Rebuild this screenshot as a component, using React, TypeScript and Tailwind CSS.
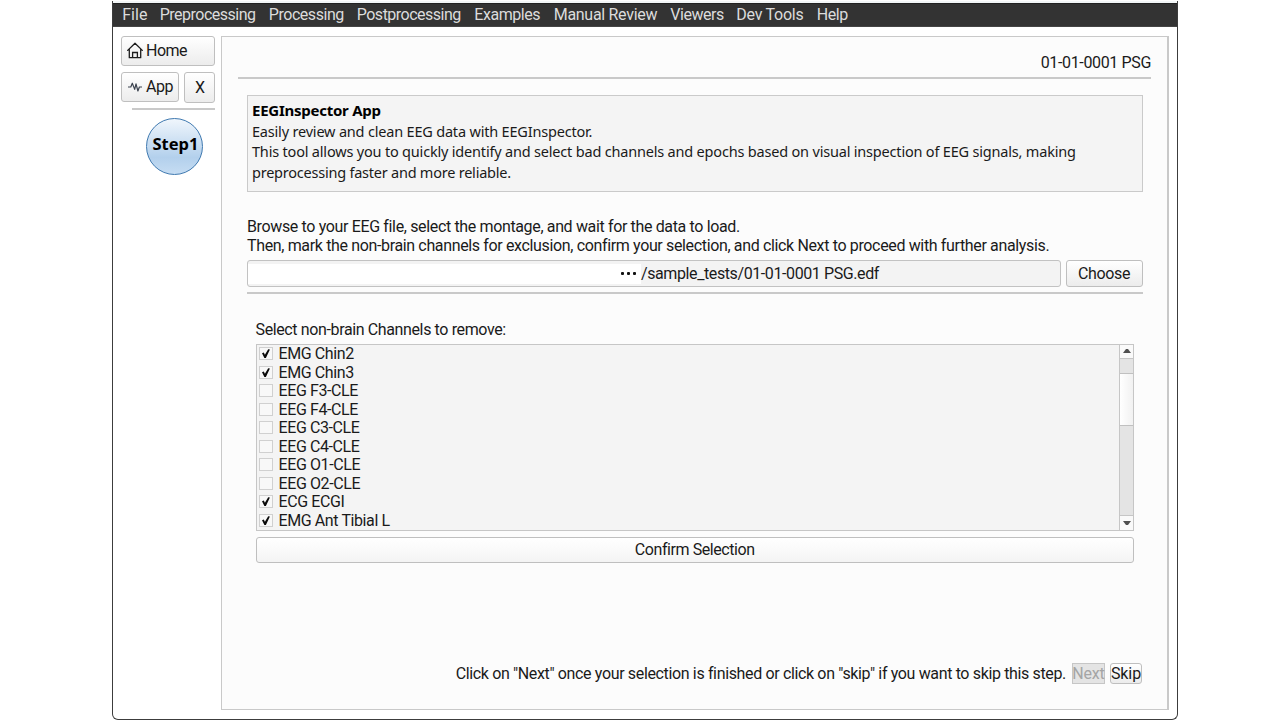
const menu = [
  { label: "File", w: "w-[37.5px]" },
  { label: "Preprocessing", w: "w-[109px] tracking-[-0.5px]" },
  { label: "Processing", w: "w-[88px] tracking-[-0.45px]" },
  { label: "Postprocessing", w: "w-[117.5px] tracking-[-0.5px]" },
  { label: "Examples", w: "w-[79.5px] tracking-[-0.45px]" },
  { label: "Manual Review", w: "w-[116.5px] tracking-[-0.3px]" },
  { label: "Viewers", w: "w-[66px] tracking-[-0.45px]" },
  { label: "Dev Tools", w: "w-[80.5px] tracking-[-0.25px]" },
  { label: "Help", w: "w-[40px] tracking-[-0.4px]" },
];

const channels = [
  { name: "EMG Chin2", on: true },
  { name: "EMG Chin3", on: true },
  { name: "EEG F3-CLE", on: false },
  { name: "EEG F4-CLE", on: false },
  { name: "EEG C3-CLE", on: false },
  { name: "EEG C4-CLE", on: false },
  { name: "EEG O1-CLE", on: false },
  { name: "EEG O2-CLE", on: false },
  { name: "ECG ECGI", on: true },
  { name: "EMG Ant Tibial L", on: true },
];

const button =
  "flex items-center whitespace-nowrap rounded-[3px] border border-[#bfbfbf] bg-linear-to-b from-white";

function HomeIcon() {
  return (
    <svg width="16" height="17" viewBox="0 0 16 17" fill="none" stroke="#1c1c1c" strokeWidth="1.3" className="-mt-px shrink-0">
      <path d="M.7 8.4 8 1.2l7.3 7.2M2.3 7.2v8.5h11.4V7.2" strokeLinejoin="round" strokeLinecap="round" />
      <path d="M5.6 15.7v-5.2h4.8v5.2" />
    </svg>
  );
}

function PulseIcon() {
  return (
    <svg width="14" height="12" viewBox="0 0 14 12" fill="none" stroke="#3d4450" strokeWidth="1.2" className="shrink-0">
      <path d="M0 6h2.8l1.5-3.8 2.4 6.2 1.3-5.6 1.9 7.2 1.5-4H14" strokeLinejoin="round" />
    </svg>
  );
}

function Checkbox({ on }: { on: boolean }) {
  return (
    <span className="h-[13px] w-[14px] shrink-0 border border-[#d0d0d0] bg-[#f8f8f8]">
      {on && (
        <svg width="12" height="11" viewBox="0 0 12 11" className="block">
          <path d="M2 5.2 3.8 4.5l1.1 2.2L8.2 1.2l1.7.4-4 8.4H4.4z" fill="#0a0a0a" />
        </svg>
      )}
    </span>
  );
}

function Scrollbar() {
  return (
    <div className="flex w-[14px] shrink-0 flex-col border-l border-[#c6c6c6] bg-[#e4e4e4]">
      <div className="flex h-[14px] items-center justify-center border-b border-[#c6c6c6] bg-[#fafafa]">
        <svg width="8" height="4" viewBox="0 0 8 4"><path d="M0 4 3 0h2l3 4z" fill="#505050" /></svg>
      </div>
      <div className="mt-[14px] h-[53px] border-y border-[#c0c0c0] bg-linear-to-r from-white to-[#f1f1f1]" />
      <div className="mt-auto flex h-[15px] items-center justify-center border-t border-[#c6c6c6] bg-[#fafafa]">
        <svg width="8" height="4" viewBox="0 0 8 4"><path d="M0 0h8L5 4H3z" fill="#505050" /></svg>
      </div>
    </div>
  );
}

export default function App() {
  return (
    <div className="h-[720px] w-[1280px] overflow-hidden bg-white pl-[112px] font-['Roboto',sans-serif] text-[16px] leading-[18.5px] text-[#1a1a1a]">
      <div className="h-[720px] w-[1066px] bg-white pt-px">
        <div className="h-full w-full rounded-b-[6px] border-x border-b border-[#3c3c3c]">
          <div className="h-[2px] bg-[#f3f7f8]" />
          <nav className="flex h-[24px] items-center border-y border-t-[#222] border-b-[#444] bg-[#333] pl-[9.25px] text-[#dcdcdc]">
            {menu.map((m) => (
              <span key={m.label} className={`${m.w} shrink-0 whitespace-nowrap`}>{m.label}</span>
            ))}
          </nav>
          <div className="flex pt-[9px] pl-[8px]">
            <aside className="mr-[6px] flex w-[94px] shrink-0 flex-col">
              <button className={`${button} to-[#ececec] h-[30px] gap-[3px] pl-[5px] tracking-[-0.5px]`}>
                <HomeIcon />
                <span className="pt-px">Home</span>
              </button>
              <div className="mt-[6px] flex justify-between">
                <button className={`${button} to-[#ececec] h-[30px] w-[58px] gap-[4px] pl-[6px] tracking-[-0.4px]`}>
                  <PulseIcon />
                  <span>App</span>
                </button>
                <button className={`${button} to-[#ececec] h-[31px] w-[31px] justify-center pt-px pl-px`}>X</button>
              </div>
              <div className="mt-[5px] ml-[11px] h-[2px] bg-[#c9c9c9]" />
              <div className="mt-[8px] ml-[25px] flex h-[57px] w-[57px] items-center justify-center rounded-full border border-[#3f79b0] bg-linear-to-b from-[#f0f6fc] via-[#b3d0ec] via-70% to-[#c6ddf3]">
                <span className="mb-[4px] pl-[2px] font-['Noto_Sans',sans-serif] text-[16.5px] font-bold text-black">Step1</span>
              </div>
            </aside>
            <main className="flex h-[674px] w-[948px] shrink-0 flex-col border border-r-2 border-[#c9c9c9] bg-[#fcfcfc] tracking-[-0.355px]">
              <div className="mr-[16px] ml-[16px] flex h-[42px] items-end justify-end border-b-2 border-[#c9c9c9] pb-[5px]">01-01-0001 PSG</div>
              <section className="mt-[16px] ml-[25px] h-[97px] w-[896px] border border-[#cacaca] bg-[#f4f4f4] pt-[4px] pl-[4px] font-['Noto_Sans',sans-serif] text-[14.5px] leading-[20.5px] tracking-[-0.19px] whitespace-nowrap">
                <h1 className="text-[15px] font-bold tracking-[-0.25px] text-black">EEGInspector App</h1>
                <p>Easily review and clean EEG data with EEGInspector.</p>
                <p>This tool allows you to quickly identify and select bad channels and epochs based on visual inspection of EEG signals, making</p>
                <p className="tracking-[-0.23px]">preprocessing faster and more reliable.</p>
              </section>
              <div className="mt-[26px] ml-[25px] w-[896px] whitespace-nowrap">
                <p>Browse to your EEG file, select the montage, and wait for the data to load.</p>
                <p>Then, mark the non-brain channels for exclusion, confirm your selection, and click Next to proceed with further analysis.</p>
              </div>
              <div className="mt-[5px] ml-[25px] flex h-[27px] w-[895.5px] justify-between">
                <div className="flex w-[813.5px] items-center rounded-[3px] border border-[#c2c2c2] bg-[#f3f3f3]">
                  <span className="flex h-[20px] w-[393px] items-center justify-end gap-[3px] bg-white pr-[5px]">
                    <i className="size-[3px] rounded-[1px] bg-[#111]" />
                    <i className="size-[3px] rounded-[1px] bg-[#111]" />
                    <i className="size-[3px] rounded-[1px] bg-[#111]" />
                  </span>
                  <span className="pt-px tracking-[-0.4px]">/sample_tests/01-01-0001 PSG.edf</span>
                </div>
                <button className={`${button} to-[#ececec] w-[77px] justify-center pt-px`}>Choose</button>
              </div>
              <div className="mt-[5px] ml-[25px] h-[2px] w-[895.5px] bg-[#c9c9c9]" />
              <div className="mt-[26px] ml-[33.5px] w-[878.5px]">
                <p className="relative top-px tracking-[-0.375px]">Select non-brain Channels to remove:</p>
                <div className="mt-[5px] flex h-[187px] justify-between border border-[#c6c6c6] bg-[#f4f4f4]">
                  <ul className="tracking-[-0.4px]">
                    {channels.map((c) => (
                      <li key={c.name} className="flex h-[18.5px] items-center gap-[6px] pl-[2px]">
                        <Checkbox on={c.on} />
                        <span className="pt-[1.5px]">{c.name}</span>
                      </li>
                    ))}
                  </ul>
                  <Scrollbar />
                </div>
                <button className={`${button} to-[#f4f4f4] mt-[6px] h-[26px] w-full justify-center pt-[1.5px] tracking-[-0.42px]`}>Confirm Selection</button>
              </div>
              <footer className="mt-auto mr-[25px] mb-[25px] flex items-center justify-end whitespace-nowrap">
                <span className="pt-px">Click on "Next" once your selection is finished or click on "skip" if you want to skip this step.</span>
                <button className="ml-[6px] flex h-[21px] w-[33px] items-center justify-center border border-[#c6c6c6] bg-[#e4e4e4] pt-px tracking-[-0.2px] text-[#a5a5a5]">Next</button>
                <button className={`${button} to-[#ececec] ml-[5px] h-[21px] w-[32px] justify-center pt-px tracking-[-0.1px]`}>Skip</button>
              </footer>
            </main>
          </div>
        </div>
      </div>
    </div>
  );
}
